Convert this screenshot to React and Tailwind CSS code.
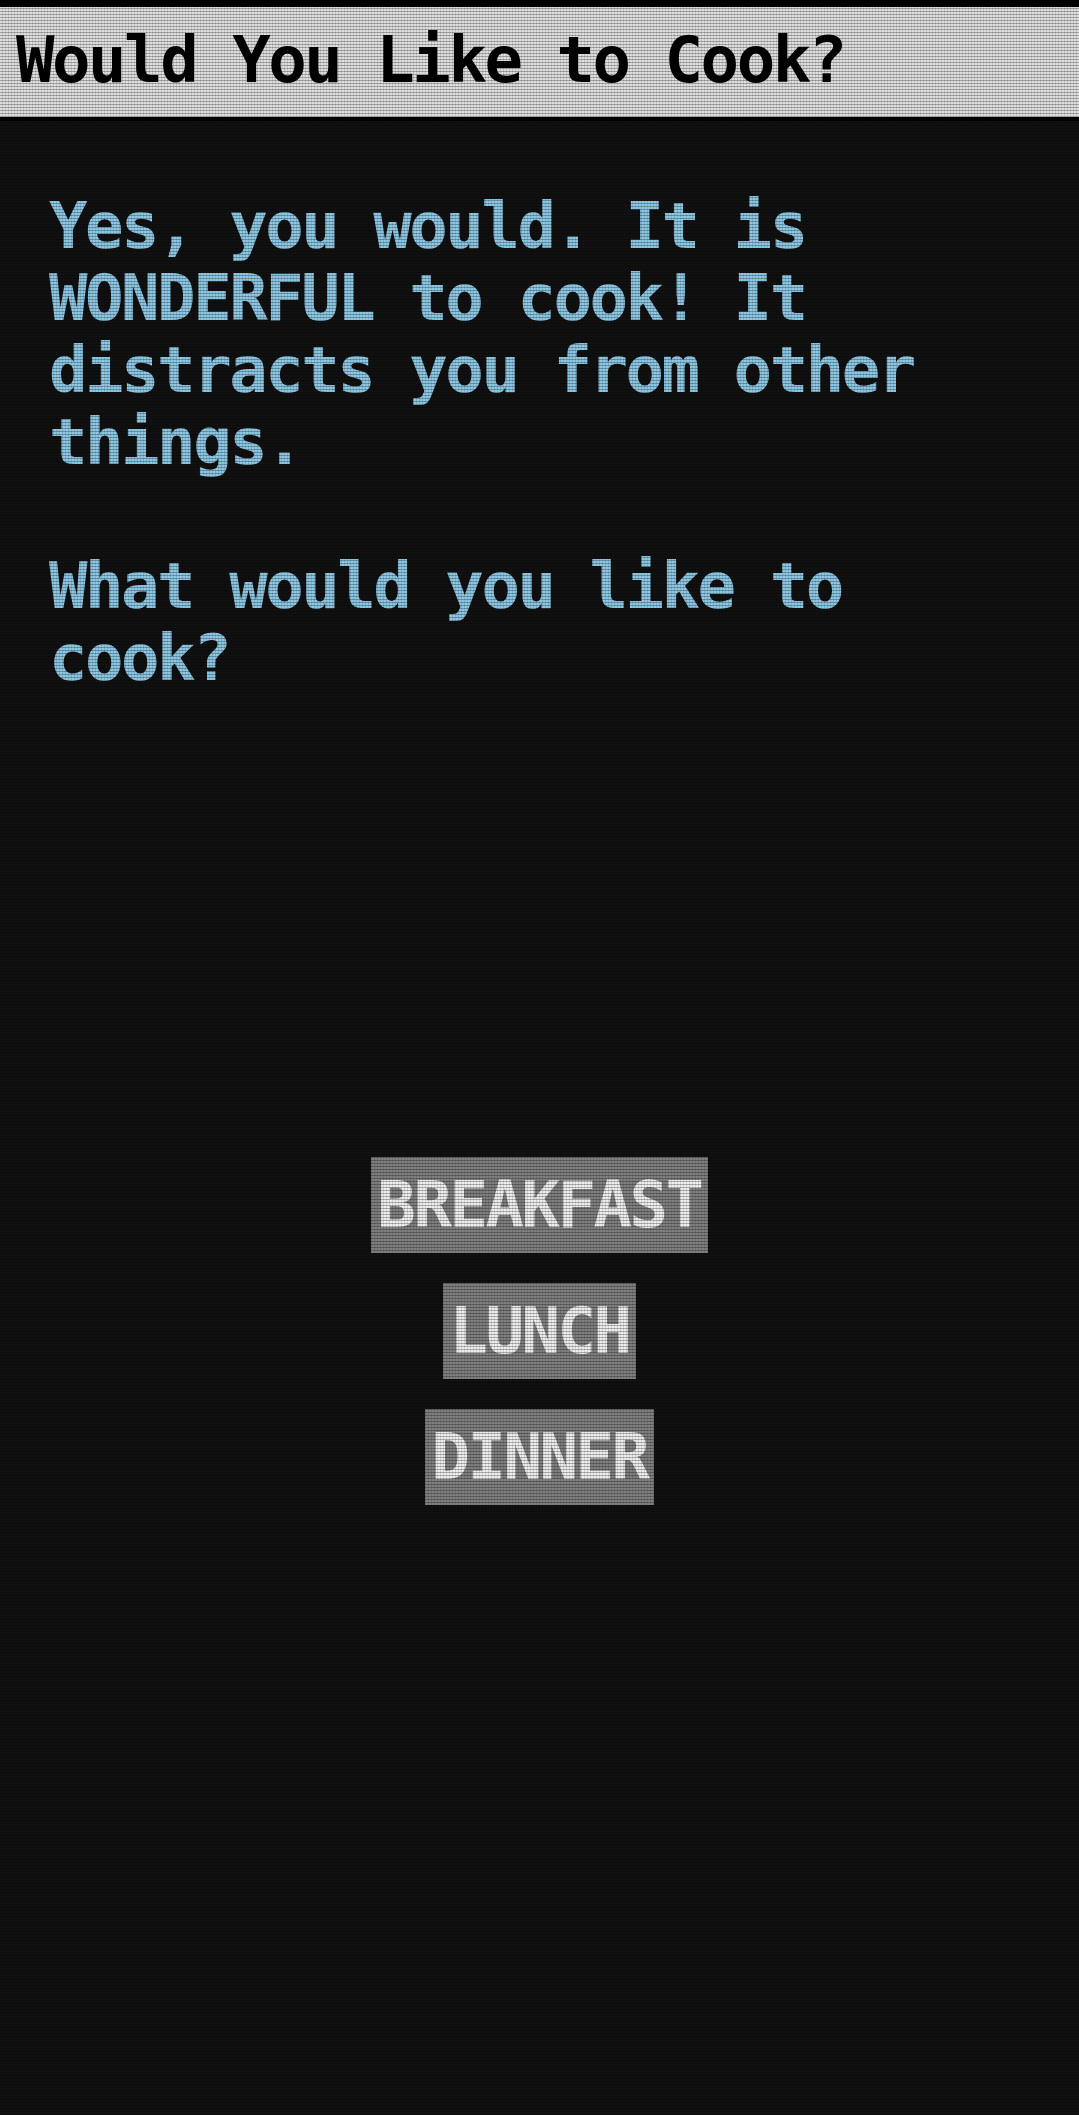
import React from "react";

const choices = ["BREAKFAST", "LUNCH", "DINNER"];

export default function App() {
  return (
    <div
      className="relative min-h-screen bg-[#121112] text-[64px] font-bold leading-[72px] tracking-[-2.5px]"
      style={{ fontFamily: '"DejaVu Sans Mono", "Liberation Mono", monospace' }}
    >
      <header className="border-t-[7px] border-b-[4px] border-black bg-[#dedede] pl-4 pt-[17px] pb-[21px] text-black">
        <h1>Would You Like to Cook?</h1>
      </header>

      <main className="px-[49px] pt-[69px]">
        <div className="max-w-[960px] text-[#8cc8e4]">
          <p>Yes, you would. It is WONDERFUL to cook! It distracts you from other things.</p>
          <p className="mt-[72px]">What would you like to cook?</p>
        </div>

        <div className="mt-[463px] flex flex-col items-center gap-[30px]">
          {choices.map((c) => (
            <button
              key={c}
              className="bg-[#7f7f7f] px-[6px] py-3 font-bold text-[#eeeeee]"
              style={{ fontFamily: '"DejaVu Sans Mono", "Liberation Mono", monospace' }}
            >
              {c}
            </button>
          ))}
        </div>
      </main>

      {/* crt scanlines over the whole screen */}
      <div className="pointer-events-none absolute inset-0 bg-[repeating-linear-gradient(to_bottom,transparent_0px,transparent_2px,rgba(0,0,0,0.28)_2px,rgba(0,0,0,0.28)_3px)]" />
      <div className="pointer-events-none absolute inset-0 bg-[repeating-linear-gradient(to_right,transparent_0px,transparent_2px,rgba(0,0,0,0.12)_2px,rgba(0,0,0,0.12)_3px)]" />
    </div>
  );
}
